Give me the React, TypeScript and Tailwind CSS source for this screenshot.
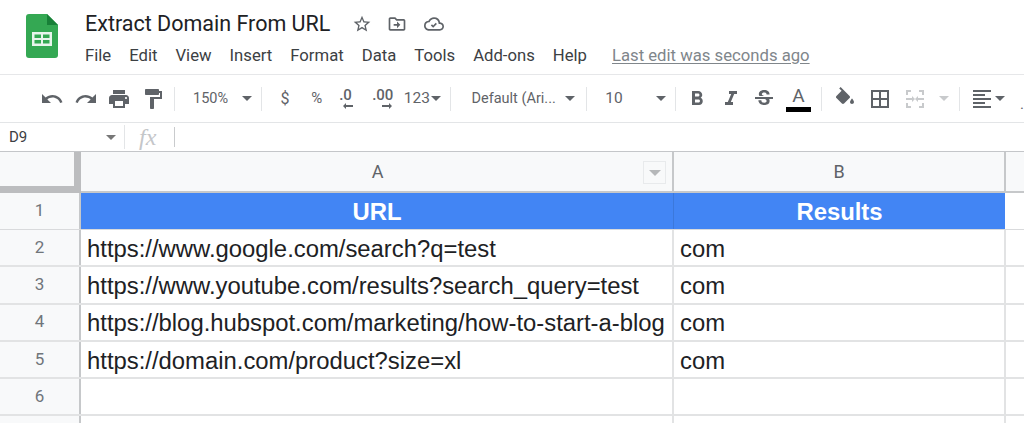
const Caret = ({ className = 'border-t-[#5f6368]' }: { className?: string }) => (
  <span className={`inline-block shrink-0 w-0 h-0 border-x-[5px] border-x-transparent border-t-[5px] ${className}`} />
)

const Sep = ({ ml }: { ml: string }) => <div className={`w-px h-[24px] bg-[#e3e5e7] shrink-0 ${ml}`} />

const Icon = ({ d, ml, size = 24, fill = '#5f6368' }: { d: string; ml: string; size?: number; fill?: string }) => (
  <svg viewBox="0 0 24 24" width={size} height={size} fill={fill} className={`shrink-0 ${ml}`}>
    <path d={d} />
  </svg>
)

const menus = ['File', 'Edit', 'View', 'Insert', 'Format', 'Data', 'Tools', 'Add-ons', 'Help']

const rows = [
  ['https://www.google.com/search?q=test', 'com'],
  ['https://www.youtube.com/results?search_query=test', 'com'],
  ['https://blog.hubspot.com/marketing/how-to-start-a-blog', 'com'],
  ['https://domain.com/product?size=xl', 'com'],
  ['', ''],
]

export default function App() {
  return (
    <div className="w-[1024px] h-[423px] overflow-hidden bg-white font-['Roboto',sans-serif] text-[#3c4043]">
      {/* Title bar */}
      <div className="h-[75px] flex border-b border-[#e6e7e9]">
        <svg viewBox="0 0 32 44" width="32" height="44" className="ml-[26px] mt-[14px] shrink-0">
          <path d="M3 0h18l11 11v30a3 3 0 0 1-3 3H3a3 3 0 0 1-3-3V3a3 3 0 0 1 3-3z" fill="#34a853" />
          <path d="M21 0l11 11H21z" fill="#188038" />
          <path d="M6 18h20v14H6z M8.500 20.500v3.500h6.500v-3.500z M17 20.500v3.500h6.500v-3.500z M8.500 26v3.500h6.500V26z M17 26v3.500h6.500V26z" fill="#e8f5ec" fillRule="evenodd" />
        </svg>
        <div className="ml-[27px] flex flex-col">
          <div className="flex items-center h-[24px] mt-[12px]">
            <span className="text-[21.500px] leading-[24px] text-[#202124] w-[267px] whitespace-nowrap">Extract Domain From URL</span>
            <Icon ml="" size={20} d="M22 9.240l-7.190-.62L12 2 9.190 8.630 2 9.240l5.460 4.730L5.820 21 12 17.270 18.180 21l-1.630-7.030L22 9.240zM12 15.400l-3.760 2.270 1-4.280-3.320-2.880 4.380-.38L12 6.100l1.710 4.040 4.380.38-3.320 2.880 1 4.280L12 15.400z" />
            <Icon ml="ml-[15px]" size={20} d="M20 6h-8l-2-2H4c-1.100 0-2 .9-2 2v12c0 1.100.9 2 2 2h16c1.100 0 2-.9 2-2V8c0-1.100-.9-2-2-2zm0 12H4V6h5.170l2 2H20v10zm-8-1l4-4-4-4v3H8v2h4v3z" />
            <Icon ml="ml-[17px]" size={20} d="M19.350 10.040A7.490 7.490 0 0 0 12 4C9.110 4 6.600 5.640 5.350 8.040A5.994 5.994 0 0 0 0 14c0 3.310 2.690 6 6 6h13c2.760 0 5-2.240 5-5 0-2.640-2.050-4.780-4.650-4.960zM19 18H6c-2.210 0-4-1.790-4-4s1.790-4 4-4h.71C7.370 7.690 9.480 6 12 6c3.040 0 5.500 2.460 5.500 5.500v.5H19c1.660 0 3 1.340 3 3s-1.340 3-3 3zm-8-1.500l4.500-4.500-1.400-1.400-3.100 3.100-1.400-1.400L8.200 13.700z" />
          </div>
          <div className="flex items-center h-[20px] mt-[10px] text-[16.700px] leading-[20px] text-[#3c4043]">
            {menus.map(m => (
              <span key={m} className="mr-[18px] whitespace-nowrap">{m}</span>
            ))}
            <span className="ml-[7px] text-[#80868b] underline underline-offset-2 whitespace-nowrap">Last edit was seconds ago</span>
          </div>
        </div>
      </div>

      {/* Toolbar */}
      <div className="h-[48px] flex items-center border-b border-[#e3e5e7] text-[#5f6368] overflow-hidden">
        <Icon ml="ml-[40px]" d="M12.500 8c-2.650 0-5.050.99-6.900 2.600L2 7v9h9l-3.620-3.620c1.390-1.160 3.160-1.880 5.120-1.880 3.540 0 6.550 2.310 7.600 5.500l2.370-.78C21.080 11.030 17.150 8 12.500 8z" />
        <Icon ml="ml-[10px]" d="M18.400 10.600C16.550 8.990 14.150 8 11.500 8c-4.650 0-8.580 3.030-9.960 7.220L3.900 16c1.050-3.190 4.050-5.500 7.600-5.500 1.950 0 3.730.72 5.120 1.880L13 16h9V7l-3.600 3.600z" />
        <Icon ml="ml-[9px]" d="M19 8H5c-1.660 0-3 1.340-3 3v6h4v4h12v-4h4v-6c0-1.660-1.340-3-3-3zm-3 11H8v-5h8v5zm3-7c-.55 0-1-.45-1-1s.45-1 1-1 1 .45 1 1-.45 1-1 1zm-1-9H6v4h12V3z" />
        <Icon ml="ml-[10px]" d="M18 4V3c0-.55-.45-1-1-1H5c-.55 0-1 .45-1 1v4c0 .55.45 1 1 1h12c.55 0 1-.45 1-1V6h1v4H9v11c0 .55.45 1 1 1h2c.55 0 1-.45 1-1v-9h8V4h-3z" />
        <Sep ml="ml-[9px]" />
        <span className="ml-[18px] text-[14.500px] w-[40px]">150%</span>
        <Caret className="ml-[10px] border-t-[#5f6368]" />
        <Sep ml="ml-[9px]" />
        <span className="ml-[18px] text-[16px] w-[10px]">$</span>
        <span className="ml-[21px] text-[15px] w-[13px]">%</span>
        <div className="ml-[15px] w-[14px] flex flex-col items-start">
          <span className="text-[15px] leading-[15px] font-medium">.0</span>
          <svg viewBox="0 0 10 6" width="10" height="6" className="ml-[4px]"><path d="M0 3l3-3v2h7v2H3v2z" fill="#5f6368" /></svg>
        </div>
        <div className="ml-[19px] w-[22px] flex flex-col items-start">
          <span className="text-[15px] leading-[15px] font-medium">.00</span>
          <svg viewBox="0 0 10 6" width="10" height="6" className="ml-[10px]"><path d="M10 3L7 0v2H0v2h7v2z" fill="#5f6368" /></svg>
        </div>
        <span className="ml-[10px] text-[15.500px] w-[27px]">123</span>
        <Caret className="ml-[1px] border-x-[4px] border-t-[4px] border-t-[#5f6368]" />
        <Sep ml="ml-[9px]" />
        <span className="ml-[20px] text-[14.500px] w-[87px] whitespace-nowrap">Default (Ari...</span>
        <Caret className="ml-[8px] border-t-[#5f6368]" />
        <Sep ml="ml-[11px]" />
        <span className="ml-[18px] text-[15.500px] w-[18px]">10</span>
        <Caret className="ml-[33px] border-t-[#5f6368]" />
        <Sep ml="ml-[9px]" />
        <Icon ml="ml-[9px]" d="M15.600 10.790c.97-.67 1.650-1.770 1.650-2.790 0-2.260-1.750-4-4-4H7v14h7.040c2.090 0 3.710-1.700 3.710-3.790 0-1.520-.86-2.820-2.150-3.420zM10 6.500h3c.83 0 1.500.67 1.500 1.500s-.67 1.500-1.500 1.500h-3v-3zm3.500 9H10v-3h3.500c.83 0 1.500.67 1.500 1.500s-.67 1.500-1.500 1.500z" />
        <Icon ml="ml-[10px]" d="M10 4v3h2.210l-3.420 8H6v3h8v-3h-2.210l3.420-8H18V4z" />
        <Icon ml="ml-[9px]" d="M6.850 7.080C6.850 4.370 9.450 3 12.240 3c1.640 0 3 .49 3.900 1.280.77.65 1.460 1.730 1.460 3.240h-3.010c0-.31-.05-.59-.15-.85-.29-.86-1.200-1.280-2.250-1.280-1.860 0-2.340 1.020-2.340 1.700 0 .48.25.88.74 1.210.38.25.77.48 1.410.7H7.390c-.21-.34-.54-.89-.54-1.920zM21 12v-2H3v2h9.620c1.150.45 1.960.75 1.960 1.970 0 1-.81 1.670-2.280 1.670-1.540 0-2.930-.54-2.930-2.510H6.400c0 .55.08 1.130.24 1.580.81 2.290 3.290 3.300 5.670 3.300 2.270 0 5.300-.89 5.300-4.050 0-.3-.01-1.160-.48-1.940H21V12z" />
        <div className="ml-[10px] flex flex-col items-center w-[25px]">
          <span className="text-[19px] leading-[21px]">A</span>
          <div className="w-[25px] h-[5px] bg-black mt-[1px]" />
        </div>
        <Sep ml="ml-[10px]" />
        <Icon ml="ml-[11px]" d="M16.560 8.940L7.620 0 6.210 1.410l2.380 2.380-5.150 5.150c-.59.59-.59 1.540 0 2.120l5.500 5.500c.29.29.68.44 1.060.44s.77-.15 1.060-.44l5.500-5.500c.59-.58.59-1.530 0-2.120zM19 11.500s-2 2.170-2 3.500c0 1.100.9 2 2 2s2-.9 2-2c0-1.330-2-3.500-2-3.500z" />
        <Icon ml="ml-[11px]" d="M3 3v18h18V3H3zm8 16H5v-6h6v6zm0-8H5V5h6v6zm8 8h-6v-6h6v6zm0-8h-6V5h6v6z" />
        <Icon ml="ml-[11px]" fill="#c8cacc" d="M3 3h5v2H5v3H3V3zm13 0h5v5h-2V5h-3V3zM3 16h2v3h3v2H3v-5zm16 0h2v5h-5v-2h3v-3zM3 11h6V9l3 3-3 3v-2H3v-2zm18 0v2h-6v2l-3-3 3-3v2h6z" />
        <Caret className="ml-[12px] border-x-[4px] border-t-[4px] border-t-[#c8cacc]" />
        <Sep ml="ml-[10px]" />
        <Icon ml="ml-[10px]" d="M3 3h18v2H3V3zm0 4h12v2H3V7zm0 4h18v2H3v-2zm0 4h12v2H3v-2zm0 4h18v2H3v-2z" />
        <Caret className="ml-[1px] border-x-[4px] border-t-[4px] border-t-[#5f6368]" />
        <span className="ml-[15px] text-[15px] leading-[15px] mt-[12px]">.</span>
      </div>

      {/* Formula bar */}
      <div className="h-[29px] flex items-center border-b border-[#c4c6c9]">
        <span className="ml-[9px] w-[97px] text-[15px] text-[#3c4043]">D9</span>
        <Caret className="border-x-[3px] border-t-[3px] border-t-[#777]" />
        <div className="ml-[8px] w-px h-[24px] bg-[#e3e5e7]" />
        <span className="ml-[14px] w-[23px] font-['Liberation_Serif',serif] italic text-[24px] leading-[24px] text-[#c4c6c9]">fx</span>
        <div className="ml-[12px] w-px h-[20px] bg-[#c9cbcd]" />
      </div>

      {/* Grid header */}
      <div className="flex h-[41px] bg-[#f8f9fa] border-b-2 border-[#c6c8ca]">
        <div className="w-[81px] shrink-0 border-r-[7px] border-b-[7px] border-[#bcbdbf] -mb-[2px]" />
        <div className="w-[593px] shrink-0 border-r-2 border-[#c6c8ca] relative flex items-center justify-center text-[18px] text-[#5f6368]">
          <span className="ml-[2px]">A</span>
          <div className="absolute right-[6px] top-[9px] w-[23px] h-[23px] border border-[#e8eaec] flex items-center justify-center">
            <Caret className="border-t-[#b5b7b9] border-x-[6px] border-t-[6px]" />
          </div>
        </div>
        <div className="w-[332px] shrink-0 border-r-2 border-[#c6c8ca] flex items-center justify-center text-[18px] text-[#5f6368]">B</div>
      </div>

      {/* Row 1 */}
      <div className="flex h-[37px] border-b border-[#d9dadc]">
        <div className="w-[81px] shrink-0 bg-[#f8f9fa] border-r-2 border-[#c6c8ca] flex items-center justify-center text-[17px] text-[#70757a]">1</div>
        <div className="w-[593px] shrink-0 bg-[#4285f4] border-r border-[#3b78db] flex items-center justify-center pt-[2px] font-['Liberation_Sans',sans-serif] font-bold text-[23.850px] text-white">URL</div>
        <div className="w-[331px] shrink-0 bg-[#4285f4] flex items-center justify-center pt-[2px] font-['Liberation_Sans',sans-serif] font-bold text-[23.850px] text-white">Results</div>
      </div>

      {/* Data rows */}
      {rows.map((r, i) => (
        <div key={i} className="flex h-[37.250px] border-b-2 border-[#e2e3e4]">
          <div className="w-[81px] shrink-0 bg-[#f8f9fa] border-r-2 border-[#c6c8ca] flex items-center justify-center text-[17px] text-[#70757a]">{i + 2}</div>
          <div className="w-[593px] shrink-0 border-r-2 border-[#e2e3e4] flex items-center pl-[6px] pt-[2px] font-['Liberation_Sans',sans-serif] text-[23.850px] text-[#202124] whitespace-nowrap overflow-hidden">{r[0]}</div>
          <div className="w-[332px] shrink-0 border-r-2 border-[#e2e3e4] flex items-center pl-[6px] pt-[2px] font-['Liberation_Sans',sans-serif] text-[23.850px] text-[#202124]">{r[1]}</div>
        </div>
      ))}
      <div className="flex h-[10px]">
        <div className="w-[81px] shrink-0 bg-[#f8f9fa] border-r-2 border-[#c6c8ca]" />
        <div className="w-[593px] shrink-0 border-r-2 border-[#e2e3e4]" />
        <div className="w-[332px] shrink-0 border-r-2 border-[#e2e3e4]" />
      </div>
    </div>
  )
}
